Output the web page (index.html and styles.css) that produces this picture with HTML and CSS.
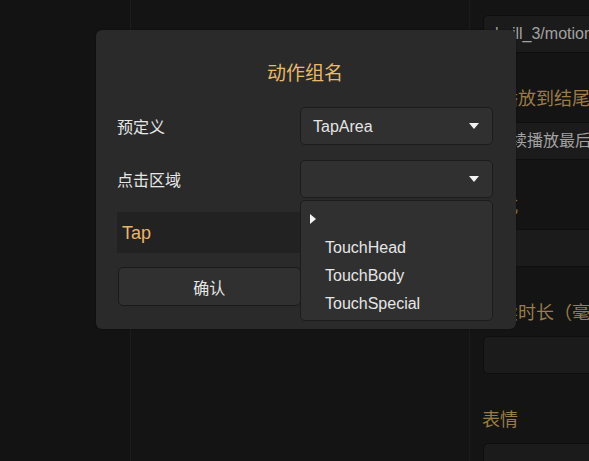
FILE: index.html
```html
<!DOCTYPE html>
<html lang="zh">
<head>
<meta charset="utf-8">
<title>动作组名</title>
<link rel="stylesheet" href="styles.css">
</head>
<body>
<div class="app">
  <aside class="left-pane"></aside>
  <main class="middle-pane"></main>
  <aside class="right-pane">
    <div class="field">keill_3/motions/tap_body.motion3.json</div>
    <div class="label">仅播放到结尾</div>
    <div class="field">继续播放最后一帧</div>
    <div class="label">模式</div>
    <div class="field"></div>
    <div class="label">持续时长（毫秒）</div>
    <div class="field"></div>
    <div class="label">表情</div>
    <div class="field"></div>
  </aside>

  <div class="dialog">
    <div class="dialog-title">动作组名</div>
    <div class="row">
      <div class="row-label">预定义</div>
      <div class="select">
        <span class="select-value">TapArea</span>
        <span class="caret"></span>
      </div>
    </div>
    <div class="row">
      <div class="row-label">点击区域</div>
      <div class="select select-open">
        <span class="select-value"></span>
        <span class="caret"></span>
        <ul class="menu">
          <li class="menu-item current"><span class="marker"></span></li>
          <li class="menu-item">TouchHead</li>
          <li class="menu-item">TouchBody</li>
          <li class="menu-item">TouchSpecial</li>
        </ul>
      </div>
    </div>
    <div class="name-input">Tap</div>
    <div class="buttons">
      <button class="btn">确认</button>
      <button class="btn">取消</button>
    </div>
  </div>
</div>
</body>
</html>
```

FILE: styles.css
```css
* {
  box-sizing: border-box;
}

html, body {
  margin: 0;
  padding: 0;
  background: #141414;
}

body {
  width: 589px;
  height: 461px;
  overflow: hidden;
  font-family: "Liberation Sans", "Noto Sans CJK SC", sans-serif;
  color: #e4e4e4;
}

.app {
  position: relative;
  display: flex;
  width: 589px;
  height: 461px;
}

.left-pane {
  width: 131px;
  border-right: 1px solid #1c1c1c;
  background: #131313;
}

.middle-pane {
  width: 339px;
  border-right: 1px solid #1c1c1c;
  background: #141414;
}

.right-pane {
  flex: 1;
  overflow: hidden;
  padding: 15px 0 0 13px;
  background: #141414;
}

.field {
  width: 160px;
  height: 38px;
  border: 1px solid #0e0e0e;
  border-radius: 5px;
  background: #1b1b1b;
  color: #a2a2a2;
  font-size: 16px;
  line-height: 36px;
  padding-left: 11px;
  white-space: nowrap;
  overflow: hidden;
}

.label {
  height: 69px;
  padding-top: 33px;
  line-height: 26px;
  font-size: 18px;
  color: #9a7b4a;
  white-space: nowrap;
  margin-left: -1px;
}

.dialog {
  position: absolute;
  left: 96px;
  top: 30px;
  width: 420px;
  height: 299px;
  background: #2a2a2a;
  border-radius: 6px;
  padding: 30px 23px 0 21px;
  display: flex;
  flex-direction: column;
  box-shadow: 0 0 2px rgba(0, 0, 0, 0.4);
}

.dialog-title {
  text-align: center;
  font-size: 19px;
  line-height: 26px;
  color: #e8b96d;
  margin-bottom: 20px;
  padding-top: 1px;
}

.row {
  display: flex;
  align-items: center;
  height: 38px;
  margin-bottom: 15px;
}

.row-label {
  width: 183px;
  font-size: 16px;
  color: #e6e6e6;
}

.select {
  position: relative;
  width: 193px;
  height: 38px;
  border: 1px solid #1c1c1c;
  border-radius: 5px;
  background: #303030;
  display: flex;
  align-items: center;
  padding-left: 12px;
  font-size: 16px;
  color: #e4e4e4;
}

.select-value {
  flex: 1;
  padding-top: 2px;
}

.caret {
  width: 0;
  height: 0;
  border-left: 5px solid transparent;
  border-right: 5px solid transparent;
  border-top: 6px solid #f2f2f2;
  margin-right: 13px;
}

.menu {
  position: absolute;
  left: -1px;
  top: 39px;
  width: 193px;
  height: 121px;
  margin: 0;
  padding: 5px 0 0 0;
  list-style: none;
  background: #303030;
  border: 1px solid #1c1c1c;
  border-radius: 5px;
  z-index: 5;
}

.menu-item {
  height: 28px;
  line-height: 28px;
  padding-left: 24px;
  font-size: 16px;
  color: #e6e6e6;
  white-space: nowrap;
}

.menu-item.current {
  position: relative;
}

.marker {
  position: absolute;
  left: 9px;
  top: 8px;
  width: 0;
  height: 0;
  border-top: 5px solid transparent;
  border-bottom: 5px solid transparent;
  border-left: 6px solid #f4f4f4;
}

.name-input {
  height: 41px;
  margin-top: -1px;
  background: #222222;
  color: #e8b66a;
  font-size: 18px;
  line-height: 39px;
  padding-top: 2px;
  padding-left: 5px;
}

.buttons {
  display: grid;
  grid-template-columns: 1fr 1fr;
  column-gap: 10px;
  margin-top: 14px;
  padding-left: 1px;
}

.btn {
  height: 39px;
  border: 1px solid #1a1a1a;
  border-radius: 5px;
  background: #303030;
  color: #e6e6e6;
  font-family: "Liberation Sans", "Noto Sans CJK SC", sans-serif;
  font-size: 16px;
}
```
